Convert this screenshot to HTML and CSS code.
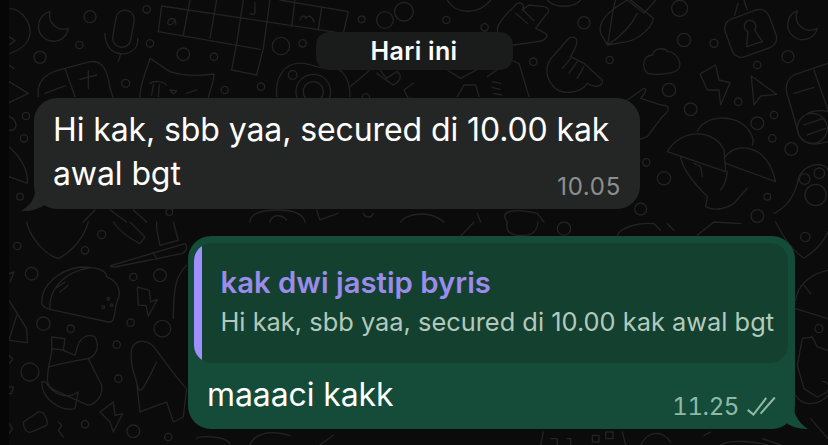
FILE: index.html
```html
<!DOCTYPE html>
<html lang="id">
<head>
  <meta charset="UTF-8">
  <title>Hari ini</title>
  <meta name="viewport" content="width=device-width, initial-scale=1.0">
  <link rel="stylesheet" href="styles.css">
</head>
<body>
  <svg class="wallpaper" viewBox="0 0 828 445" aria-hidden="true">
    <!-- top left -->
    <g transform="scale(.3333)">
      <path d="M485 18L1030 100M475 95L780 148M485 18L475 95M570 0L550 105M650 0L630 115M730 0L710 130M810 0L790 145M710 130L695 210L770 225L790 145M840 0L1045 35L1030 100M885 0L875 80M965 22L955 90"/>
      <path d="M525 58C510 50 500 65 505 72C512 78 522 70 525 58L528 75M765 8V35C765 45 755 45 752 40M900 60C905 45 915 45 918 55C922 45 935 45 942 65"/>
      <path d="M150 35A45 45 0 1 0 205 85A42 42 0 0 1 150 35Z"/>
      <rect x="343" y="30" width="55" height="112" rx="27" transform="rotate(10 370 85)"/>
      <path d="M315 100C315 150 350 168 380 160C400 155 415 140 413 115M362 162L355 185"/>
      <circle cx="270" cy="50" r="18"/><circle cx="440" cy="28" r="11"/><circle cx="120" cy="172" r="18"/><circle cx="238" cy="135" r="11"/><circle cx="450" cy="130" r="11"/><circle cx="550" cy="163" r="19"/><circle cx="642" cy="170" r="11"/><circle cx="377" cy="250" r="12"/><circle cx="674" cy="270" r="11"/><circle cx="783" cy="260" r="11"/><circle cx="843" cy="138" r="26"/><circle cx="908" cy="130" r="11"/><circle cx="1085" cy="58" r="10"/><circle cx="1155" cy="60" r="25"/><circle cx="1212" cy="35" r="28"/><circle cx="78" cy="348" r="11"/><circle cx="72" cy="415" r="11"/><circle cx="60" cy="590" r="10"/><circle cx="878" cy="225" r="13"/><circle cx="1098" cy="292" r="11"/><circle cx="508" cy="636" r="10"/>
      <path d="M30 25C70 30 92 70 90 100C88 130 60 150 30 160M27 110L45 122L27 135M27 195L42 205M27 245L85 280L27 308"/>
      <path d="M27 350C45 355 52 375 45 385C40 392 32 392 27 390M27 440C60 470 85 510 82 550L27 530"/>
      <path d="M115 290C110 250 130 225 170 212L270 185C305 180 322 205 330 265L340 295M195 205L225 290M135 280L195 258M240 238L290 225M265 212V265"/>
      <path d="M420 295C418 250 440 215 450 175L510 215C550 228 600 228 642 222C642 250 628 272 625 295M450 250C465 240 490 245 500 255M460 255L455 285M478 255L475 290M510 270L530 272L520 282ZM560 280L590 270"/>
      <path d="M830 290C825 235 850 195 890 190C930 185 950 210 1000 205C1030 205 1050 240 1050 290"/>
      <circle cx="940" cy="275" r="52"/><circle cx="940" cy="275" r="30"/>
      <path d="M1050 260L1110 210M1130 220L1180 255C1200 245 1210 225 1190 215L1160 235L1140 210"/>
      <path d="M1240 250L1212 270L1225 295H1242"/>
      <path d="M250 666L285 630M330 630L380 666M400 630L440 666M750 666C750 640 790 630 830 630C880 630 910 640 915 666M810 666C815 645 840 640 860 660M950 630L960 660L1015 640M1090 640C1095 655 1115 655 1120 640"/>
    </g>
    <!-- top right -->
    <g transform="translate(414) scale(.3333)">
      <path d="M100 0C120 40 190 50 230 0M400 0C420 25 480 25 500 0"/>
      <path d="M250 85C255 60 290 30 310 10C320 5 335 15 325 30L345 15L390 20C410 25 405 40 395 45L365 85L395 100C405 110 390 125 370 125L300 135C270 130 250 110 250 85ZM305 40L340 70M325 28L360 62"/>
      <path d="M640 0C590 30 550 60 560 100L580 135L640 125C680 115 715 80 718 55L650 0M605 0C590 50 590 95 580 135M670 40C650 80 620 110 580 135M640 0L690 40L725 0"/>
      <rect x="940" y="40" width="140" height="120" rx="30" transform="rotate(-20 1010 100)"/>
      <path d="M962 45L972 10M1000 30L990 0M1002 62A18 18 0 0 1 1022 90L1045 125L998 140L1002 95A18 18 0 0 1 1002 62Z"/>
      <path d="M1150 32A45 45 0 1 0 1210 85A42 42 0 0 1 1150 32Z"/>
      <circle cx="797" cy="25" r="24"/><circle cx="810" cy="120" r="20"/><circle cx="900" cy="130" r="12"/><circle cx="1122" cy="170" r="18"/><circle cx="1030" cy="195" r="11"/><circle cx="510" cy="68" r="18"/><circle cx="97" cy="60" r="11"/><circle cx="212" cy="82" r="11"/><circle cx="587" cy="180" r="11"/><circle cx="358" cy="185" r="11"/><circle cx="765" cy="270" r="20"/><circle cx="830" cy="328" r="19"/><circle cx="973" cy="305" r="11"/><circle cx="1030" cy="370" r="19"/><circle cx="1080" cy="345" r="11"/><circle cx="1075" cy="415" r="11"/><circle cx="1132" cy="447" r="19"/><circle cx="697" cy="487" r="11"/><circle cx="750" cy="535" r="20"/><circle cx="1060" cy="590" r="10"/><circle cx="680" cy="627" r="18"/><circle cx="1030" cy="648" r="19"/>
      <path d="M700 220C680 200 690 165 715 165C720 145 750 140 762 155C785 155 805 185 795 205C780 225 725 225 700 220Z"/>
      <path d="M858 222L905 195L915 240L948 248L920 315L915 270L880 270Z"/>
      <path d="M1012 228L1088 283L1040 288L1020 315Z"/>
      <path d="M480 112C500 120 480 150 470 170L510 190L565 240C570 260 540 265 520 250C500 280 440 290 415 255C390 225 395 190 420 165L460 120C465 112 475 110 480 112ZM470 175L445 205M490 185L465 220M510 200L490 235"/>
      <path d="M1242 190L1140 225C1115 240 1110 265 1125 300L1155 405C1175 440 1210 435 1242 425M1200 210L1242 330M1140 280L1200 262M1180 340C1210 325 1242 335 1242 335M1170 375L1230 355M1180 405L1235 385"/><circle cx="1195" cy="385" r="45"/>
      <path d="M640 300L690 265C700 265 695 280 680 295L740 315C770 315 770 330 745 350L700 410L660 425"/>
      <path d="M220 230L290 180L315 190L345 290M235 245L260 250M235 262L258 268M240 280L262 285M100 210L140 235L215 195"/>
      <path d="M130 290L150 255H185L195 290"/>
      <path d="M760 455C800 385 900 385 930 450L935 515ZM850 395C870 345 960 340 1000 385C1020 410 1020 425 1015 435M935 470C965 425 1060 430 1085 545L935 490M800 470C805 510 850 560 880 590L875 620C900 635 940 625 960 610L1000 565M840 490L860 500L865 530M940 515C935 550 930 555 920 570"/>
      <path d="M1080 640C1120 620 1140 590 1150 550C1160 490 1230 480 1242 510"/><circle cx="1172" cy="537" r="16"/><circle cx="1216" cy="520" r="16"/><circle cx="1205" cy="585" r="32"/>
      <path d="M280 666C250 630 310 625 370 640L390 666M-40 666C-30 645 40 625 90 666M190 640L200 666"/>
    </g>
    <!-- bottom left -->
    <g transform="translate(0 222) scale(.3333)">
      <path d="M80 0C90 50 140 100 175 110C220 85 250 50 265 0"/>
      <path d="M340 0C360 30 390 50 420 65L435 45L390 0M470 0V20L480 70L535 55L520 0"/>
      <path d="M335 130L555 65C565 75 560 90 545 95L345 135C330 135 328 132 335 130ZM460 90L470 112"/>
      <circle cx="305" cy="38" r="12"/><circle cx="255" cy="85" r="11"/><circle cx="52" cy="72" r="11"/><circle cx="95" cy="155" r="19"/><circle cx="400" cy="165" r="11"/><circle cx="480" cy="160" r="19"/><circle cx="130" cy="305" r="20"/><circle cx="212" cy="320" r="11"/><circle cx="392" cy="302" r="11"/><circle cx="487" cy="320" r="25"/><circle cx="350" cy="368" r="11"/><circle cx="90" cy="450" r="27"/><circle cx="355" cy="470" r="11"/><circle cx="400" cy="628" r="19"/><circle cx="255" cy="607" r="11"/><circle cx="505" cy="645" r="11"/>
      <path d="M27 155L42 150L30 180M27 400L38 412L27 425M27 495H40L35 515H27M27 605L38 620L27 635"/>
      <path d="M27 235L80 320L82 362L27 355M50 280L27 355"/>
      <path d="M125 240C125 190 175 145 240 135C275 135 320 140 320 165C360 180 365 215 350 240C340 290 345 300 325 300L150 262C130 258 125 250 125 240ZM150 262C145 200 195 150 265 138M165 200L195 180M180 210L205 190"/>
      <circle cx="325" cy="230" r="4"/><circle cx="310" cy="255" r="4"/><circle cx="335" cy="250" r="4"/>
      <path d="M412 195L448 205L452 240L472 232L445 282L438 250L415 250Z"/>
      <path d="M155 345L195 350L190 385L225 400L232 375C240 345 265 335 285 345C300 375 290 400 265 410L305 490C310 520 290 545 265 550L165 505C140 495 140 480 145 440L155 390ZM155 380L195 385M145 435C185 425 225 415 265 410"/>
      <path d="M125 480C125 530 180 570 225 560L235 510C205 530 165 525 135 478Z"/>
      <path d="M70 600L115 570C135 565 145 600 140 610L95 630C80 635 70 620 70 600Z"/>
      <path d="M175 600L185 610L175 625L190 645M300 570L340 540L345 580L368 575L340 630L330 600Z"/>
      <path d="M395 380C410 345 450 355 470 385C510 440 540 480 560 500L550 585L520 600L500 540L420 570L410 480C395 440 390 410 395 380ZM410 480C420 530 430 500 470 420"/>
      <path d="M520 290C520 190 530 160 560 130M590 650C590 640 680 640 690 666M750 669C760 640 800 620 870 640M1000 640L960 669"/>
    </g>
    <!-- bottom right -->
    <g transform="translate(414 222) scale(.3333)">
      <path d="M180 0L140 42M280 0C270 40 310 42 330 40C350 40 370 30 372 0M430 20A20 20 0 1 0 470 20A20 20 0 1 0 430 20M610 40C620 15 680 0 720 5L740 25M760 5L780 25M850 40L900 0L980 5"/>
      <path d="M1085 0C1110 50 1140 90 1170 108C1200 90 1230 60 1242 30M1160 45A14 14 0 1 0 1188 45A14 14 0 1 0 1160 45"/>
      <path d="M1145 235C1150 190 1190 155 1242 145M1145 260L1242 290M1170 190L1190 215"/>
      <circle cx="1215" cy="320" r="12"/>
      <path d="M1150 430L1165 350L1195 345L1210 375L1242 385M1150 430L1170 500L1210 525L1240 510C1250 490 1242 480 1225 478M1145 520C1170 560 1220 545 1242 520"/>
      <path d="M380 669L388 630M635 669L625 630M410 650H430V669M460 650H470V669M535 640H555V660H535ZM575 630H597V650H575ZM680 669C700 630 740 620 770 660M920 669C950 650 1030 660 1060 669M1190 590L1242 650"/>
      <path d="M1045 650L1100 669"/>
      <path d="M870 640L890 630"/>
    </g>
    <rect class="edge" width="9" height="445"/>
  </svg>

  <main class="chat">
    <div class="date-pill">Hari ini</div>

    <div class="bubble bubble-in">
      <svg class="tail tail-in" viewBox="0 0 24 30" aria-hidden="true"><path d="M14 0V10C14 18 8 25 0 30C9 31 17 28 24 24V0Z"/></svg>
      <div class="msg-lines">
        <p class="msg-text">Hi kak, sbb yaa, secured di 10.00 kak</p>
        <p class="msg-text">awal bgt</p>
      </div>
      <div class="meta meta-in"><span>10.05</span></div>
    </div>

    <div class="bubble bubble-out">
      <svg class="tail tail-out" viewBox="0 0 24 30" aria-hidden="true"><path d="M10 0V8C10 16 15 24 24 30C14 30 5 27 0 22V0Z"/></svg>
      <div class="quote">
        <div class="quote-bar"></div>
        <div class="quote-body">
          <div class="quote-name">kak dwi jastip byris</div>
          <div class="quote-text">Hi kak, sbb yaa, secured di 10.00 kak awal bgt</div>
        </div>
      </div>
      <div class="reply-row">
        <p class="msg-text">maaaci kakk</p>
        <div class="meta meta-out">
          <span>11.25</span>
          <svg class="ticks" viewBox="0 0 30 20" aria-hidden="true">
            <path d="M.5 13.5L6.5 18.5L20 1"/>
            <path d="M14 17.5L29 .5"/>
          </svg>
        </div>
      </div>
    </div>
  </main>
</body>
</html>
```

FILE: styles.css
```css
* { margin: 0; padding: 0; box-sizing: border-box; }
html, body { height: 100%; }
body {
  background: #0b0b0b;
  color: #fff;
  font-family: Inter, "Liberation Sans", sans-serif;
  overflow: hidden;
  position: relative;
}
.wallpaper {
  position: absolute;
  top: 0;
  left: 0;
  width: 828px;
  height: 445px;
  fill: none;
  stroke: #232323;
  stroke-width: 4;
  stroke-linejoin: round;
  stroke-linecap: round;
}
.wallpaper .edge { fill: #060606; stroke: none; }
.chat {
  position: relative;
  display: flex;
  flex-direction: column;
  padding: 32px 33px 0 34px;
}
.date-pill {
  align-self: center;
  width: 197px;
  height: 38px;
  margin-left: -1px;
  background: #1a1b1b;
  border-radius: 13px;
  font-size: 25px;
  font-weight: 600;
  letter-spacing: 0.3px;
  line-height: 38px;
  text-align: center;
}
.bubble {
  position: relative;
  width: 606px;
  border-radius: 23px;
}
.bubble-in {
  margin-top: 28px;
  height: 111px;
  padding: 10px 19px 0 19px;
  background: #242626;
}
.msg-lines { height: 70px; }
.msg-lines .msg-text { width: fit-content; }
.bubble-out {
  align-self: flex-end;
  width: 607px;
  height: 193px;
  margin-top: 27px;
  padding: 7px 7px 0 6px;
  background: #154c39;
}
.tail {
  position: absolute;
  bottom: -2px;
  width: 24px;
  height: 30px;
  z-index: -1;
}
.tail-in { left: -13px; fill: #242626; }
.tail-out { right: -13px; bottom: 0; fill: #154c39; }
.msg-text {
  font-size: 32px;
  line-height: 44px;
  letter-spacing: -0.1px;
}
.meta {
  display: flex;
  align-items: center;
  justify-content: flex-end;
  font-size: 24px;
  letter-spacing: 0.7px;
  line-height: 17px;
}
.meta-in {
  color: #8d8f8f;
}
.meta-out {
  gap: 8px;
  height: 22px;
  margin-top: 22px;
  color: #8fb9a6;
  font-variant-numeric: tabular-nums;
  letter-spacing: -0.4px;
}
.quote {
  display: flex;
  height: 120px;
  background: #14402f;
  border-radius: 18px;
  overflow: hidden;
}
.quote-bar {
  flex: 0 0 8px;
  background: #a08fff;
}
.quote-body {
  padding: 21px 0 0 18.5px;
}
.quote-name {
  color: #9b8ceb;
  font-size: 29.3px;
  font-weight: 600;
  line-height: 38px;
}
.quote-text {
  margin-top: 3px;
  color: #b1cabd;
  font-size: 25.4px;
  line-height: 34px;
  white-space: nowrap;
}
.reply-row {
  display: flex;
  justify-content: space-between;
  padding: 10px 12px 0 13px;
}
.ticks {
  width: 29px;
  height: 19px;
  fill: none;
  stroke: #8fb9a6;
  stroke-width: 2.2;
}
```
